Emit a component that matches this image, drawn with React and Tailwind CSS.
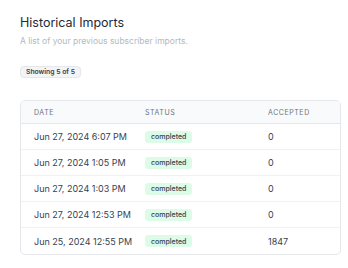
export default function App() {
  const rows = [
    ["Jun 27, 2024 6:07 PM", "0"],
    ["Jun 27, 2024 1:05 PM", "0"],
    ["Jun 27, 2024 1:03 PM", "0"],
    ["Jun 27, 2024 12:53 PM", "0"],
    ["Jun 25, 2024 12:55 PM", "1847"],
  ];
  return (
    <div className="w-[348px] h-[268px] bg-white px-[20px] pt-[15px]" style={{ fontFamily: "Inter, sans-serif" }}>
      <h1 className="text-[12.5px] leading-[16px] text-[#1f2937]">Historical Imports</h1>
      <p className="text-[8.5px] leading-[12px] text-[#b4b9c2] mt-[4px]">A list of your previous subscriber imports.</p>
      <div className="flex mt-[19px]">
        <div className="flex items-center h-[12px] px-[5px] rounded-[4px] bg-[#f3f4f6] border border-[#e5e7eb] text-[6.8px] leading-none font-semibold text-[#374151]">
          Showing 5 of 5
        </div>
      </div>
      <div className="mt-[22px] w-[321px] border border-[#e5e7eb] rounded-[5px] overflow-hidden">
        <div className="grid grid-cols-[111px_123px_1fr] pl-[13px] h-[23px] items-center bg-[#f9fafb] border-b border-[#e5e7eb] text-[7px] leading-none tracking-[0.08em] text-[#6b7280]">
          <div>DATE</div>
          <div>STATUS</div>
          <div>ACCEPTED</div>
        </div>
        {rows.map(([d, a], i) => (
          <div key={i} className={`grid grid-cols-[111px_123px_1fr] pl-[13px] h-[26px] items-center text-[9px] leading-none text-[#374151] ${i < rows.length - 1 ? "border-b border-[#f0f1f3]" : ""}`}>
            <div>{d}</div>
            <div className="flex">
              <span className="flex items-center h-[12px] px-[6px] rounded-[3px] bg-[#dcfce7] text-[7px] leading-none font-medium text-[#374151]">completed</span>
            </div>
            <div>{a}</div>
          </div>
        ))}
      </div>
    </div>
  );
}
